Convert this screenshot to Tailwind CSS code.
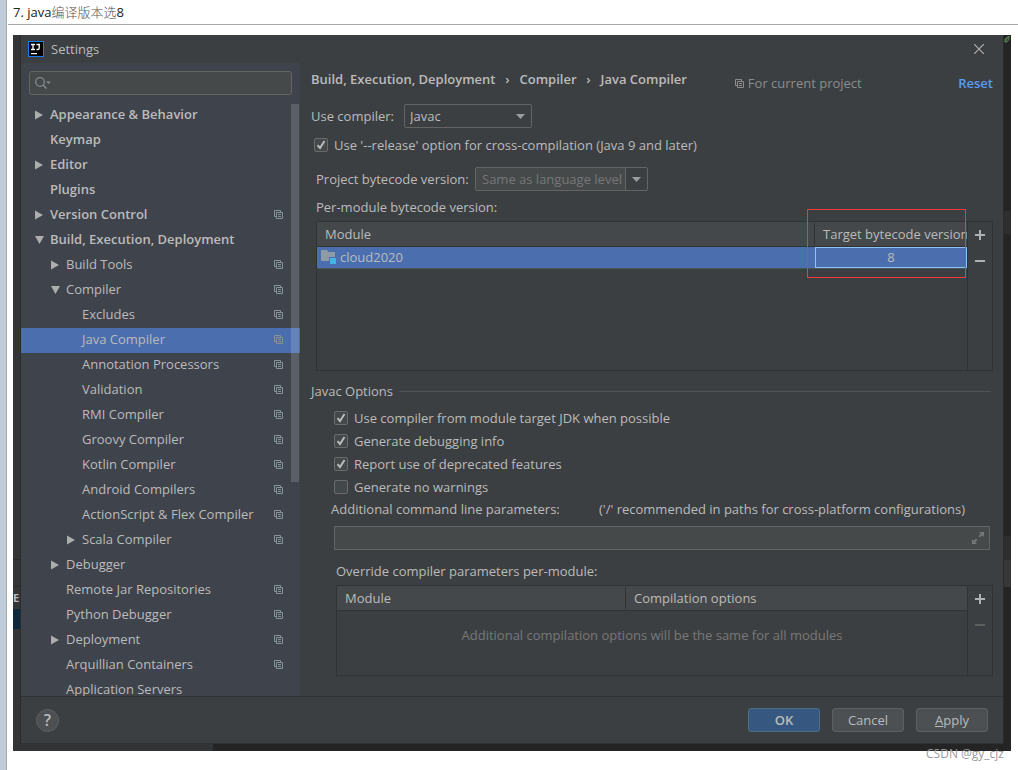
<!DOCTYPE html>
<html lang="en">
<head>
<meta charset="utf-8">
<title>Settings</title>
<script src="https://cdn.jsdelivr.net/npm/@tailwindcss/browser@4"></script>
</head>
<body class="min-h-screen bg-white flex font-['Open_Sans','Noto_Sans_CJK_SC',sans-serif] text-[13px] leading-5 text-[#bbbbbb]">
<svg class="hidden">
  <symbol id="copy" viewBox="0 0 9 9"><path d="M2 6.5H.5v-6h6V2" fill="none" stroke="currentColor"/><path d="M2.500 2.500h6v6h-6zM4 4.500h3M4 6.500h3" fill="none" stroke="currentColor"/></symbol>
  <symbol id="right" viewBox="0 0 8 10"><path d="M0 0.500L8 5L0 9.500z" fill="currentColor"/></symbol>
  <symbol id="down" viewBox="0 0 9 8"><path d="M0 0h9L4.500 8z" fill="currentColor"/></symbol>
  <symbol id="drop" viewBox="0 0 9 5"><path d="M0 0h9L4.500 5z" fill="currentColor"/></symbol>
  <symbol id="tick" viewBox="0 0 14 14"><path d="M3.500 7.200L6 10L10.500 3" fill="none" stroke="currentColor" stroke-width="2"/></symbol>
  <symbol id="plus" viewBox="0 0 10 10"><path d="M4 0h2v4h4v2H6v4H4V6H0V4h4z" fill="currentColor"/></symbol>
  <symbol id="minus" viewBox="0 0 10 2"><path d="M0 0h10v2H0z" fill="currentColor"/></symbol>
</svg>

<div class="w-[7px] shrink-0 bg-[#bfccda] border-r border-[#a8a8a8]"></div>
<main class="flex-1 min-w-0 pl-px relative">
  <h1 class="h-[25px] pl-[5px] border-b border-[#a8a8a8] text-[#222] leading-6">7. java<span class="font-light text-[#555]">编译版本选</span>8</h1>

  <div class="mt-[10px] ml-[5px] mr-[7px] bg-[#242424]">
    <div class="flex">
      <div class="w-2 shrink-0 bg-[#333536] border-r border-[#2b2b2b] flex flex-col overflow-hidden">
        <div class="h-[525px] border-b border-[#2b2b2b]"></div>
        <div class="h-[27px] border-b border-[#2b2b2b]"></div>
        <div class="h-[22px] text-[11px] font-bold leading-[22px]">E:</div>
        <div class="h-5 bg-[#0d293e]"></div>
      </div>

      <section class="flex-1 min-w-0 bg-[#3c3f41]">
        <header class="h-7 flex items-center pl-[7px] pr-[19px]">
          <svg class="w-4 h-4" viewBox="0 0 16 16"><rect x=".5" y=".5" width="15" height="15" fill="#000" stroke="#1a7df0"/><path d="M3 3.500h4M5 3.500v5M3 8.500h4M8.500 3.500h3.500M11.200 3v4.200q0 1.300-1.200 1.300H8.500" fill="none" stroke="#fff" stroke-width="1.300"/><path d="M3 12h6v1.200H3z" fill="#fff"/></svg>
          <h2 class="ml-[7px] flex-1">Settings</h2>
          <button aria-label="Close" class="text-[#b0b0b0]"><svg class="w-[10px] h-[10px]" viewBox="0 0 10 10"><path d="M0 0l10 10M10 0L0 10" stroke="currentColor" stroke-width="1.200"/></svg></button>
        </header>

        <div class="flex">
          <aside class="w-[279px] shrink-0 bg-[#3f434c]">
            <div class="pt-2 px-2 pb-2 relative">
              <input type="search" aria-label="Search settings" class="block w-full h-6 rounded-[3px] bg-[#45494a] border border-[#646464] pl-7">
              <svg class="absolute left-[14px] top-[14px] w-[17px] h-3 text-[#7f8b91]" viewBox="0 0 17 12"><circle cx="5" cy="5" r="4.300" fill="none" stroke="currentColor" stroke-width="1.300"/><path d="M8 8l3.500 3.500" stroke="currentColor" stroke-width="1.500"/><path d="M11 4.500h5L13.500 7z" fill="currentColor"/></svg>
            </div>
            <nav class="relative h-[593px] overflow-hidden" aria-label="Settings categories">
              <ul id="tree"></ul>
              <div class="absolute top-px right-px w-2 h-[378px] bg-white/15"></div>
            </nav>
          </aside>

          <div class="flex-1 min-w-0 pl-[11px] pr-[10px] pb-5">
            <div class="h-10 flex items-center">
              <div class="pb-2 flex font-semibold whitespace-nowrap"><span>Build, Execution, Deployment</span><span class="w-6 text-center">›</span><span>Compiler</span><span class="w-6 text-center">›</span><span>Java Compiler</span></div>
              <div class="ml-12 flex items-center gap-1 text-[#8c8c8c] whitespace-nowrap"><svg class="w-[9px] h-[9px]"><use href="#copy"/></svg><span class="pb-px">For current project</span></div>
              <a href="#" class="ml-auto font-semibold text-[#589df6]">Reset</a>
            </div>
            <div class="mt-px flex items-center h-6">
              <label for="compiler" class="w-[93px] pb-px">Use compiler:</label>
              <div class="relative">
                <select id="compiler" class="appearance-none block w-32 h-6 pl-[5px] leading-[22px] rounded-[2px] bg-[#3c3f41] border border-[#646464]"><option>Javac</option></select>
                <svg class="absolute right-[7px] top-[10px] w-[9px] h-[5px] text-[#9a9da0] pointer-events-none"><use href="#drop"/></svg>
              </div>
            </div>
            <label class="mt-[5px] h-6 ml-[3px] flex items-center gap-[6px]"><span class="relative w-[14px] h-[14px]"><input type="checkbox" checked class="peer appearance-none block w-[14px] h-[14px] bg-[#43494a] border border-[#6b6b6b] rounded-[2px]"><svg class="absolute inset-0 w-[14px] h-[14px] hidden peer-checked:block pointer-events-none"><use href="#tick"/></svg></span>Use '--release' option for cross-compilation (Java 9 and later)</label>
            <div class="mt-[10px] ml-[5px] flex items-center h-6">
              <label for="bytecode" class="w-[159px] pb-px">Project bytecode version:</label>
              <div class="flex w-[173px] h-6 border border-[#646464] rounded-[2px]">
                <input id="bytecode" placeholder="Same as language level" class="flex-1 min-w-0 pl-[6px] pb-px bg-[#45494a] placeholder:text-[#777777]">
                <button aria-label="Show versions" class="w-[22px] border-l border-[#646464] flex items-center justify-center text-[#9a9da0]"><svg class="w-[9px] h-[5px]"><use href="#drop"/></svg></button>
              </div>
            </div>
            <p class="mt-[6px] ml-[5px]">Per-module bytecode version:</p>
            <div class="relative mt-1 ml-[5px] h-[150px] flex border border-[#323232]">
              <div class="flex-1 min-w-0 overflow-hidden">
                <table class="w-full table-fixed border-collapse">
                  <thead><tr class="h-6 bg-[#45484a] border-b border-[#323232] text-left whitespace-nowrap">
                    <th class="p-0 pl-2 font-normal">Module</th><th class="p-0 w-[153px] font-normal"><div class="my-px h-[22px] border-l border-[#323232] pl-2 leading-[22px]">Target bytecode version</div></th></tr></thead>
                  <tbody><tr class="h-[22px] bg-[#4b6eaf] border-b border-[#4f5252]">
                    <td class="p-0"><div class="pl-1 pb-px flex items-center gap-1"><svg class="w-[15px] h-[14px]" viewBox="0 0 15 14"><path d="M0 0h6l1.500 2H14v5H8v4H0z" fill="#8f9ba6"/><path d="M9 8h6v6H9z" fill="#40b6e0"/></svg>cloud2020</div></td>
                    <td class="p-0"><div class="ml-px h-[21px] border border-[#8cc4f8] text-center leading-[18px]">8</div></td></tr></tbody>
                </table>
              </div>
              <div class="w-[25px] border-l border-[#323232] flex flex-col items-center text-[#afb1b3]">
                <button aria-label="Add module" class="h-[26px]"><svg class="w-[10px] h-[10px]"><use href="#plus"/></svg></button>
                <button aria-label="Remove module" class="h-[26px]"><svg class="w-[10px] h-[2px]"><use href="#minus"/></svg></button>
              </div>
              <div class="absolute right-[26px] -top-[13px] w-[159px] h-[69px] border border-[#f03a3a] pointer-events-none"></div>
            </div>

            <fieldset class="mt-[10px]">
              <legend class="float-left w-full flex items-center gap-[6px] pr-[2px]">Javac Options<span class="flex-1 h-px bg-[#515456]"></span></legend>
              <div class="clear-both pt-[5px] pl-[23px]">
                <label class="h-[23px] flex items-center gap-[6px]"><span class="relative w-[14px] h-[14px]"><input type="checkbox" checked class="peer appearance-none block w-[14px] h-[14px] bg-[#43494a] border border-[#6b6b6b] rounded-[2px]"><svg class="absolute inset-0 w-[14px] h-[14px] hidden peer-checked:block pointer-events-none"><use href="#tick"/></svg></span>Use compiler from module target JDK when possible</label>
                <label class="h-[23px] flex items-center gap-[6px]"><span class="relative w-[14px] h-[14px]"><input type="checkbox" checked class="peer appearance-none block w-[14px] h-[14px] bg-[#43494a] border border-[#6b6b6b] rounded-[2px]"><svg class="absolute inset-0 w-[14px] h-[14px] hidden peer-checked:block pointer-events-none"><use href="#tick"/></svg></span>Generate debugging info</label>
                <label class="h-[23px] flex items-center gap-[6px]"><span class="relative w-[14px] h-[14px]"><input type="checkbox" checked class="peer appearance-none block w-[14px] h-[14px] bg-[#43494a] border border-[#6b6b6b] rounded-[2px]"><svg class="absolute inset-0 w-[14px] h-[14px] hidden peer-checked:block pointer-events-none"><use href="#tick"/></svg></span>Report use of deprecated features</label>
                <label class="h-[23px] flex items-center gap-[6px]"><span class="relative w-[14px] h-[14px]"><input type="checkbox" class="peer appearance-none block w-[14px] h-[14px] bg-[#43494a] border border-[#6b6b6b] rounded-[2px]"><svg class="absolute inset-0 w-[14px] h-[14px] hidden peer-checked:block pointer-events-none"><use href="#tick"/></svg></span>Generate no warnings</label>
              </div>
              <div class="flex h-[22px] items-center pl-5 whitespace-nowrap"><label for="params" class="w-[268px]">Additional command line parameters:</label><span>('/' recommended in paths for cross-platform configurations)</span></div>
              <div class="relative mt-[6px] ml-[23px] mr-[3px]">
                <input id="params" class="block w-full h-6 bg-[#45494a] border border-[#646464] pl-1 pr-6">
                <svg class="absolute right-[6px] top-[6px] w-3 h-3 text-[#72777a]" viewBox="0 0 12 12"><path d="M7 0h5v5L10.200 3.200L8 5.400L6.600 4L8.800 1.800zM0 7l1.800 1.800L4 6.600L5.400 8L3.200 10.200L5 12H0z" fill="currentColor"/></svg>
              </div>
            </fieldset>
            <p class="mt-[11px] ml-[25px]">Override compiler parameters per-module:</p>
            <div class="mt-1 ml-[25px] h-[91px] flex border border-[#323232]">
              <div class="flex-1 min-w-0">
                <table class="w-full table-fixed border-collapse">
                  <thead><tr class="h-6 bg-[#45484a] border-b border-[#323232] text-left">
                    <th class="p-0 pl-2 w-[288px] font-normal">Module</th><th class="p-0 font-normal"><div class="my-px h-[22px] border-l border-[#323232] pl-2 leading-[22px]">Compilation options</div></th></tr></thead>
                  <tbody><tr><td colspan="2" class="p-0 pt-[14px] text-center text-[#787878]">Additional compilation options will be the same for all modules</td></tr></tbody>
                </table>
              </div>
              <div class="w-[25px] border-l border-[#323232] flex flex-col items-center text-[#afb1b3]">
                <button aria-label="Add override" class="h-[26px]"><svg class="w-[10px] h-[10px]"><use href="#plus"/></svg></button>
                <button aria-label="Remove override" disabled class="h-[26px] text-[#5e6060]"><svg class="w-[10px] h-[2px]"><use href="#minus"/></svg></button>
              </div>
            </div>
          </div>
        </div>

        <footer class="h-12 border-y border-[#2f3133] flex items-center gap-3 pl-[15px] pr-[15px]">
          <button aria-label="Help" class="w-[23px] h-[23px] mr-auto rounded-full bg-[#4c5052] border border-[#5e6060] font-semibold text-[16px] leading-5">?</button>
          <button class="w-[72px] h-6 rounded-[3px] bg-[#365880] border border-[#4c708c] font-semibold">OK</button>
          <button class="w-[72px] h-6 rounded-[3px] bg-[#4c5052] border border-[#5e6060]">Cancel</button>
          <button class="w-[72px] h-6 rounded-[3px] bg-[#4c5052] border border-[#5e6060]"><span class="underline">A</span>pply</button>
        </footer>
      </section>

      <div class="w-2 shrink-0 border-l border-[#2b2b2b] overflow-hidden flex flex-col">
        <svg class="w-[6px] h-2 text-[#5b8a50]" viewBox="0 0 6 8"><path d="M1 7l4-6v3L3 7H1V4l4-3" fill="none" stroke="currentColor"/></svg>
        <div class="mt-[168px] h-[23px] bg-[#2d2e2f]"></div>
        <div class="mt-[302px] h-6 bg-[#2d2e2f]"></div>
        <div class="h-[27px] bg-[#353738]"></div>
      </div>
    </div>
    <div class="h-[7px] w-[200px] bg-[#323436]"></div>
  </div>
  <div class="absolute right-[14px] top-[744px] text-[12px] text-[#9a9a9a]">CSDN @gy_cjz</div>
</main>

<script>
  const rows = [
    ['Appearance & Behavior', 0, 'r', 0], ['Keymap', 0, '', 0], ['Editor', 0, 'r', 0], ['Plugins', 0, '', 0],
    ['Version Control', 0, 'r', 1], ['Build, Execution, Deployment', 0, 'd', 0], ['Build Tools', 1, 'r', 1],
    ['Compiler', 1, 'd', 1], ['Excludes', 2, '', 1], ['Java Compiler', 2, '', 1], ['Annotation Processors', 2, '', 1],
    ['Validation', 2, '', 1], ['RMI Compiler', 2, '', 1], ['Groovy Compiler', 2, '', 1], ['Kotlin Compiler', 2, '', 1],
    ['Android Compilers', 2, '', 1], ['ActionScript & Flex Compiler', 2, '', 1], ['Scala Compiler', 2, 'r', 1],
    ['Debugger', 1, 'r', 0], ['Remote Jar Repositories', 1, '', 1], ['Python Debugger', 1, '', 1],
    ['Deployment', 1, 'r', 1], ['Arquillian Containers', 1, '', 1], ['Application Servers', 1, '', 0]
  ];
  const indent = ['pl-[13px] font-semibold', 'pl-[29px]', 'pl-[45px]'];
  const arrows = {
    r: '<svg class="w-2 h-[10px] ml-px"><use href="#right"/></svg>',
    d: '<svg class="w-[9px] h-2 ml-px"><use href="#down"/></svg>',
    '': ''
  };
  document.getElementById('tree').innerHTML = rows.map(([name, level, arrow, project]) =>
    `<li><a href="#" class="h-[25px] flex items-center pb-[2px] pr-[17px] ${indent[level]} ${name === 'Java Compiler' ? 'bg-[#4b6eaf]' : ''}">
      <span class="w-4 text-[#adadad]">${arrows[arrow]}</span><span class="flex-1 pb-px">${name.replace('&', '&amp;')}</span>
      ${project ? '<svg class="w-[9px] h-[9px] text-[#87939a]"><use href="#copy"/></svg>' : ''}</a></li>`).join('');
</script>
</body>
</html>
